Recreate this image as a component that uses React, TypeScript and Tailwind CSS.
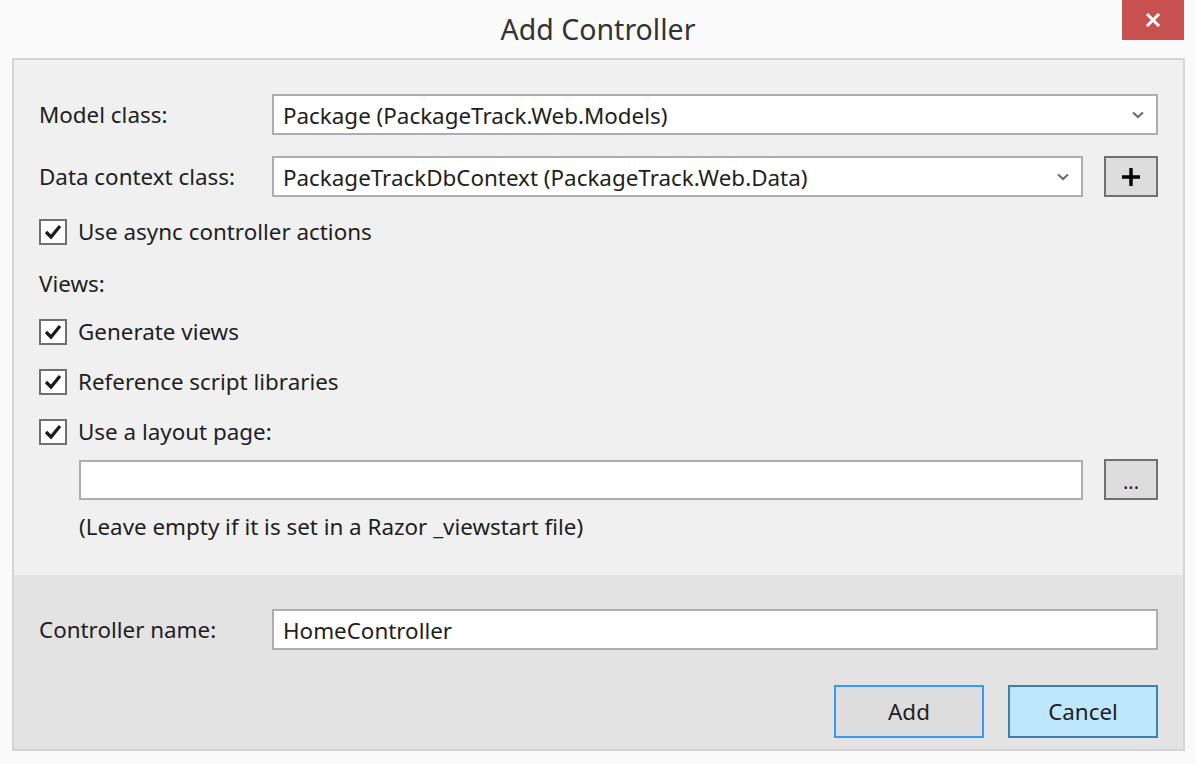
import React from "react";

const font = { fontFamily: '"Noto Sans", "Open Sans", sans-serif' };

const Chevron = () => (
  <svg width="12" height="8" viewBox="0 0 12 8" className="shrink-0">
    <polyline points="1,1.5 6,6 11,1.5" fill="none" stroke="#6d6d6d" strokeWidth="2.2" />
  </svg>
);

const Check = ({ label }: { label: string }) => (
  <div className="flex items-center h-[26px]">
    <div className="w-[28px] h-[26px] border-2 border-[#707070] bg-white flex items-center justify-center">
      <svg width="18" height="16" viewBox="0 0 18 16">
        <polyline points="2,8 7,13 16,2" fill="none" stroke="#1a1a1a" strokeWidth="3.2" />
      </svg>
    </div>
    <span className="ml-[11px] text-[22.4px] leading-[26px] text-[#1e1e1e]">{label}</span>
  </div>
);

const Select = ({ value, className }: { value: string; className: string }) => (
  <div className={`h-[41px] border-2 border-[#acacb2] bg-white flex items-center pl-[9px] pr-[12px] ${className}`}>
    <span className="flex-1 text-[22.4px] text-[#1e1e1e] leading-[26px] mt-[3px]">{value}</span>
    <Chevron />
  </div>
);

export default function App() {
  return (
    <div className="w-[1196px] h-[764px] bg-[#fafafa] flex flex-col" style={font}>
      <div className="h-[58px] relative flex items-center justify-center shrink-0">
        <span className="text-[28.5px] text-[#333333] mt-[1px]">Add Controller</span>
        <div className="absolute top-0 left-[1122px] w-[62px] h-[40px] bg-[#c75050] flex items-center justify-center">
          <svg width="16" height="14" viewBox="0 0 16 14">
            <path d="M2 1 L14 13 M14 1 L2 13" stroke="#fff" strokeWidth="3" />
          </svg>
        </div>
      </div>

      <div className="ml-[12px] w-[1173px] border-2 border-[#d5d5d5] flex flex-col">
        <div className="bg-[#f0f0f0] pt-[34px] pb-[35px] pl-[25px] pr-[25px] flex flex-col">
          <div className="flex items-center">
            <span className="w-[233px] text-[22.4px] text-[#1e1e1e]">Model class:</span>
            <Select value="Package (PackageTrack.Web.Models)" className="flex-1" />
          </div>
          <div className="flex items-center mt-[21px]">
            <span className="w-[233px] text-[22.4px] text-[#1e1e1e]">Data context class:</span>
            <Select value="PackageTrackDbContext (PackageTrack.Web.Data)" className="flex-1" />
            <div className="ml-[21px] w-[54px] h-[41px] border-2 border-[#707070] bg-[#dddddd] flex items-center justify-center">
              <svg width="20" height="20" viewBox="0 0 20 20">
                <path d="M10 1 V19 M1 10 H19" stroke="#000" strokeWidth="3.4" />
              </svg>
            </div>
          </div>
          <div className="mt-[22px]">
            <Check label="Use async controller actions" />
          </div>
          <div className="mt-[26px] h-[26px] text-[22.4px] leading-[26px] text-[#1e1e1e]">Views:</div>
          <div className="mt-[22px]">
            <Check label="Generate views" />
          </div>
          <div className="mt-[24px]">
            <Check label="Reference script libraries" />
          </div>
          <div className="mt-[24px]">
            <Check label="Use a layout page:" />
          </div>
          <div className="mt-[14px] ml-[40px] flex items-center">
            <div className="flex-1 h-[40px] border-2 border-[#acacb2] bg-white" />
            <div className="ml-[21px] w-[54px] h-[41px] border-2 border-[#707070] bg-[#dddddd] flex items-center justify-center">
              <span className="text-[20px] leading-none text-[#1e1e1e] mt-[4px]">...</span>
            </div>
          </div>
          <div className="mt-[14px] ml-[40px] h-[26px] text-[22.4px] leading-[26px] text-[#1e1e1e]">
            (Leave empty if it is set in a Razor _viewstart file)
          </div>
        </div>

        <div className="bg-[#e3e3e3] pt-[34px] pb-[11px] pl-[25px] pr-[25px] flex flex-col">
          <div className="flex items-center">
            <span className="w-[233px] text-[22.4px] text-[#1e1e1e]">Controller name:</span>
            <div className="flex-1 h-[41px] border-2 border-[#acacb2] bg-white flex items-center pl-[9px]">
              <span className="text-[22.4px] text-[#1e1e1e] leading-[26px] mt-[3px]">HomeController</span>
            </div>
          </div>
          <div className="mt-[35px] flex justify-end gap-[24px]">
            <button className="w-[150px] h-[53px] border-2 border-[#3399ff] bg-[#dddddd] text-[22.4px] text-[#1e1e1e]">
              Add
            </button>
            <button className="w-[150px] h-[53px] border-2 border-[#3c7fb1] bg-[#bee6fd] text-[22.4px] text-[#1e1e1e]">
              Cancel
            </button>
          </div>
        </div>
      </div>
    </div>
  );
}
